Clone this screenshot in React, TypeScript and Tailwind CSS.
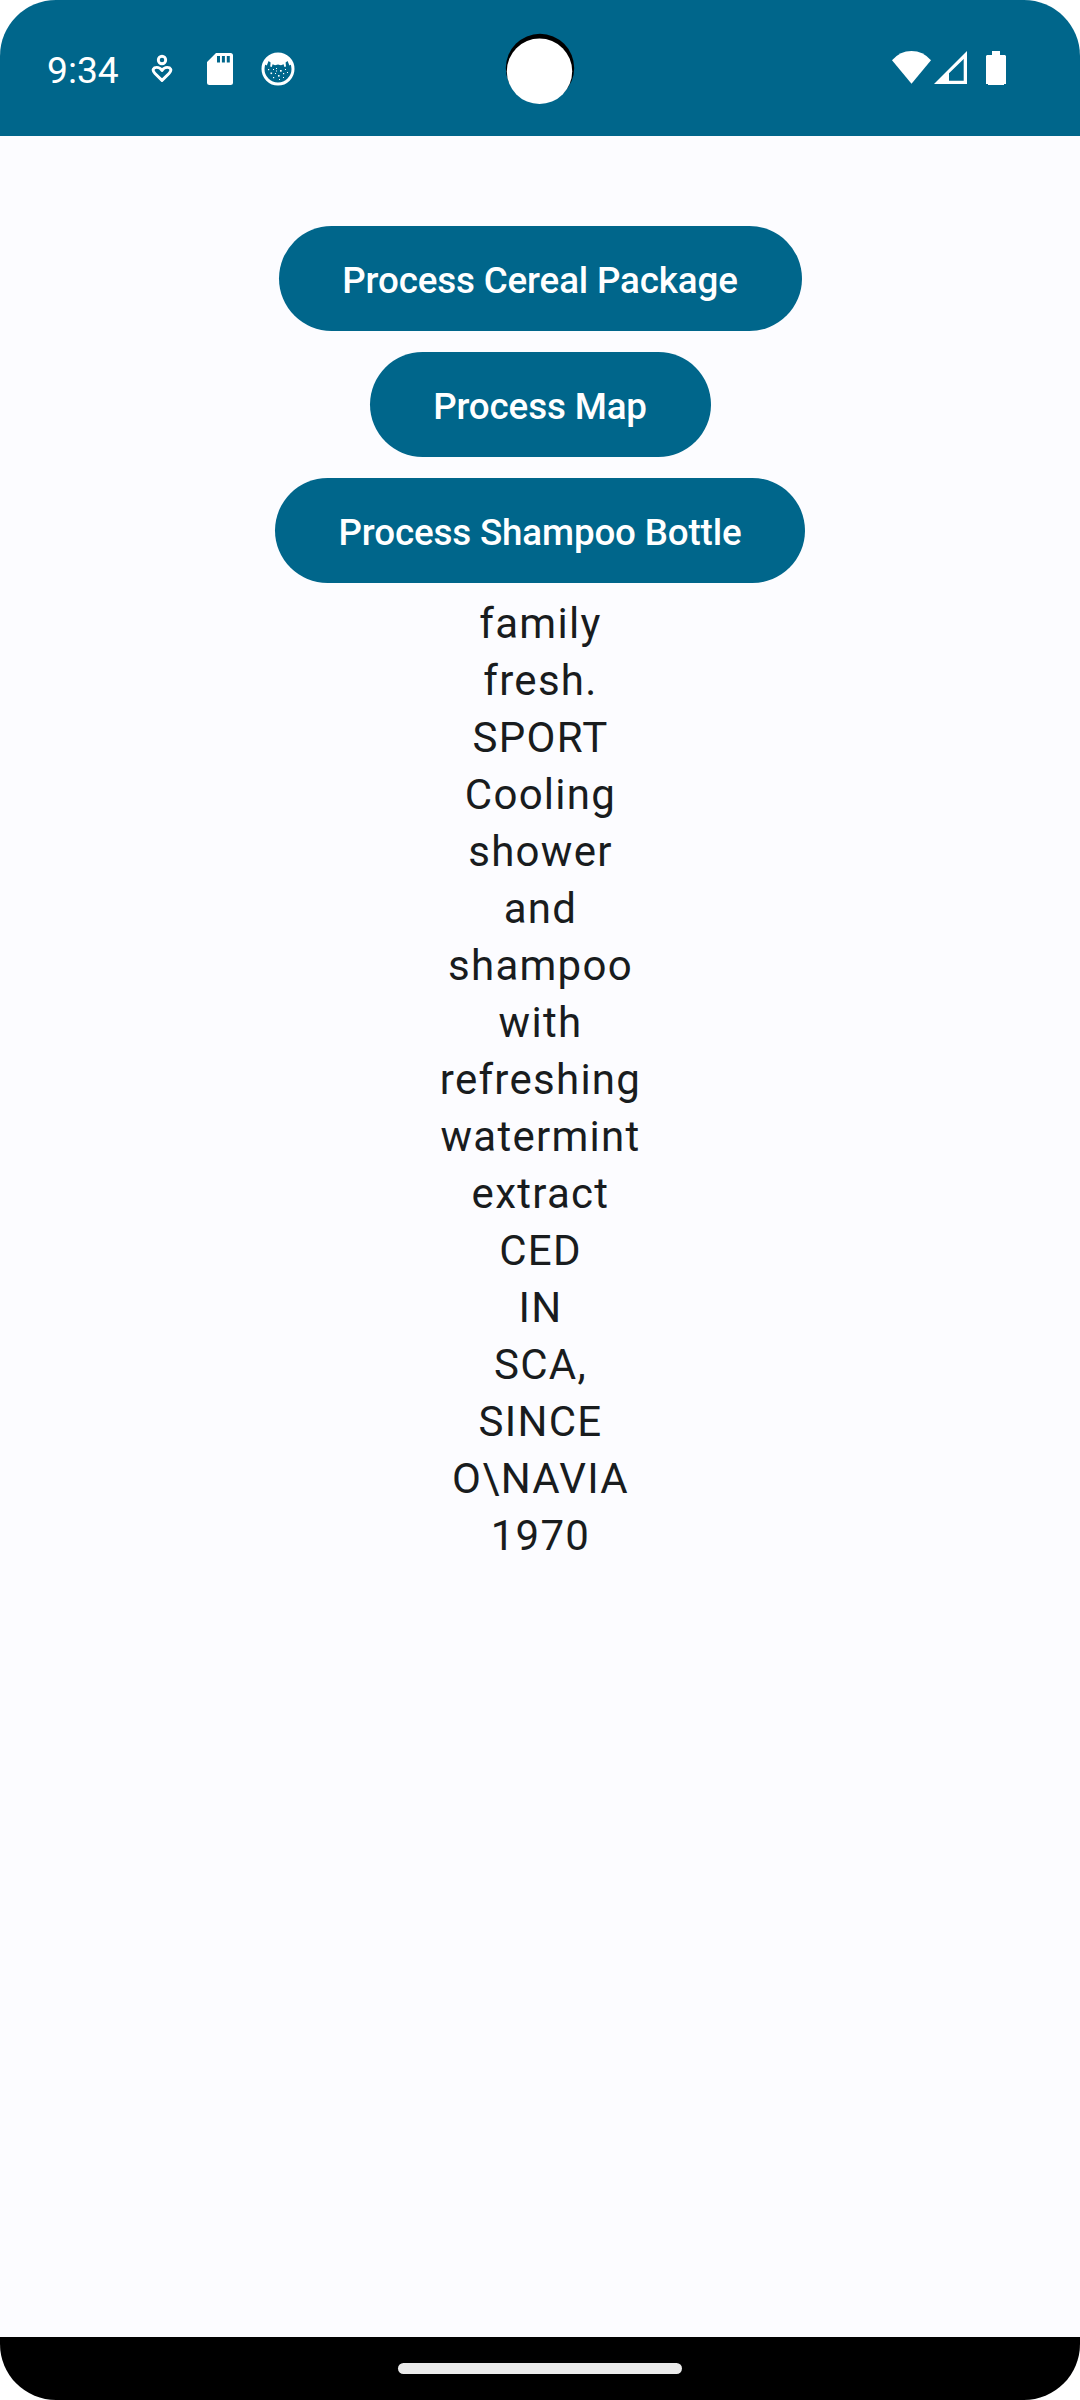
const words = [
  'family', 'fresh.', 'SPORT', 'Cooling', 'shower', 'and', 'shampoo', 'with', 'refreshing',
  'watermint', 'extract', 'CED', 'IN', 'SCA,', 'SINCE', 'O\\NAVIA', '1970',
];

const actions = [
  { label: 'Process Cereal Package', width: 'w-[523px]' },
  { label: 'Process Map', width: 'w-[341px]' },
  { label: 'Process Shampoo Bottle', width: 'w-[530px]' },
];

function PersonHeartIcon() {
  return (
    <svg className="ml-[33px] h-[30px] w-[22px]" viewBox="0 0 22 30" fill="none" stroke="white" strokeWidth="2.9">
      <circle cx="11" cy="6" r="3.7" />
      <path strokeLinejoin="round" d="M11 26.4 L4 19.5 C0.4 15.8 2.6 13.4 5.8 13.4 C8.2 13.4 9.8 14.7 11 16.5 C12.2 14.7 13.8 13.4 16.2 13.4 C19.4 13.4 21.6 15.8 18 19.5 Z" />
    </svg>
  );
}

function SdCardIcon() {
  return (
    <svg className="ml-[34px] h-8 w-[26px]" viewBox="0 0 26 32">
      <path fill="white" fillRule="evenodd" d="M9 0 H23.5 Q26 0 26 2.5 V29.5 Q26 32 23.5 32 H2.5 Q0 32 0 29.5 V9 Z M10 3 V9.6 H13 V3 Z M14.9 3 V9.6 H17.9 V3 Z M19.8 3 V9.6 H22.8 V3 Z" />
    </svg>
  );
}

function CatFaceIcon() {
  return (
    <svg className="ml-[28px] h-[34px] w-[34px]" viewBox="0 0 34 34">
      <circle cx="17" cy="17" r="15" fill="none" stroke="white" strokeWidth="3" />
      <path fill="white" d="M3 12 A15 15 0 0 1 31 12 L28.4 13.5 L26.6 9 L24.6 10.6 L25 14.5 L23.4 15 L22.6 12.2 L20 13.2 L17 12.6 L14 13.2 L11.6 12.2 L10.8 15 L9.2 14.5 L9.6 10.6 L7.6 9 L5.8 13.5 Z" />
      <g fill="white">
        <rect x="7" y="17" width="1.2" height="1.2" /><rect x="12" y="17" width="1" height="1" />
        <rect x="15" y="16" width="1" height="1" /><rect x="19" y="18" width="1.7" height="1.7" />
        <rect x="24" y="17" width="1" height="1" /><rect x="9.5" y="20.5" width="1.6" height="1.6" />
        <rect x="14" y="21" width="1" height="1" /><rect x="22" y="21" width="1.2" height="1.2" />
        <rect x="26" y="20" width="1" height="1" /><rect x="12" y="25" width="1.2" height="1.2" />
        <rect x="17" y="23" width="1.6" height="1.6" /><rect x="18" y="27" width="1" height="1" />
        <rect x="22" y="25" width="1" height="1" /><rect x="15" y="18.5" width="1" height="1" />
      </g>
    </svg>
  );
}

function StatusBar() {
  return (
    <header className="relative flex h-[136px] items-start justify-between bg-[#00668b] pl-[47px] pr-[74px] text-white">
      <div className="flex h-[138px] items-center">
        <span className="w-[71px] whitespace-nowrap pt-px text-[37.2px] leading-[44px]">9:34</span>
        <PersonHeartIcon />
        <SdCardIcon />
        <CatFaceIcon />
      </div>
      <div className="flex pt-[51px]">
        <svg className="h-[34px] w-[39px]" viewBox="0 0 39 34" fill="white">
          <path d="M0 9.3 Q8 0 19.5 0 Q31 0 39 9.3 L19.5 32.8 Z" />
        </svg>
        <svg className="ml-[3px] h-[34px] w-[33px]" viewBox="0 0 33 34" fill="white">
          <path fillRule="evenodd" d="M0 33 L33 0 V33 Z M15 22.2 V29.7 H29.7 V8 Z" />
        </svg>
        <svg className="ml-[19px] h-[34px] w-5" viewBox="0 0 20 34" fill="white">
          <path d="M6 0 H14 V4 H19 L20 5 V33 H18 V34 H2 V33 H0 V5 L1 4 H6 Z" />
        </svg>
      </div>
      <svg className="absolute left-[505px] top-[33px] h-[73px] w-[70px]" viewBox="0 0 70 73">
        <circle cx="35" cy="35" r="34.2" fill="black" />
        <circle cx="34.5" cy="38.3" r="32.7" fill="white" />
      </svg>
    </header>
  );
}

export default function App() {
  return (
    <div className="h-[2400px] w-[1080px] bg-white font-[Roboto,sans-serif]">
      <div className="flex h-full flex-col overflow-hidden rounded-[56px] bg-[#fcfcff]">
        <StatusBar />
        <main className="flex flex-1 flex-col items-center pt-[90px]">
          <div className="flex flex-col items-center gap-[21px]">
            {actions.map(({ label, width }) => (
              <button
                key={label}
                className={`${width} h-[105px] whitespace-nowrap rounded-full bg-[#00668b] pt-[5px] text-[36.75px] font-medium tracking-[-0.15px] text-white`}
              >
                {label}
              </button>
            ))}
          </div>
          <div className="mt-[12px] pl-px text-center text-[42px] leading-[57px] tracking-[1.28px] text-[#191c1e]">
            {words.map((word) => (
              <p key={word}>{word}</p>
            ))}
          </div>
        </main>
        <footer className="flex h-[63px] justify-center bg-black pt-[26px]">
          <div className="h-[11px] w-[284px] rounded-full bg-[#ebebeb]" />
        </footer>
      </div>
    </div>
  );
}
